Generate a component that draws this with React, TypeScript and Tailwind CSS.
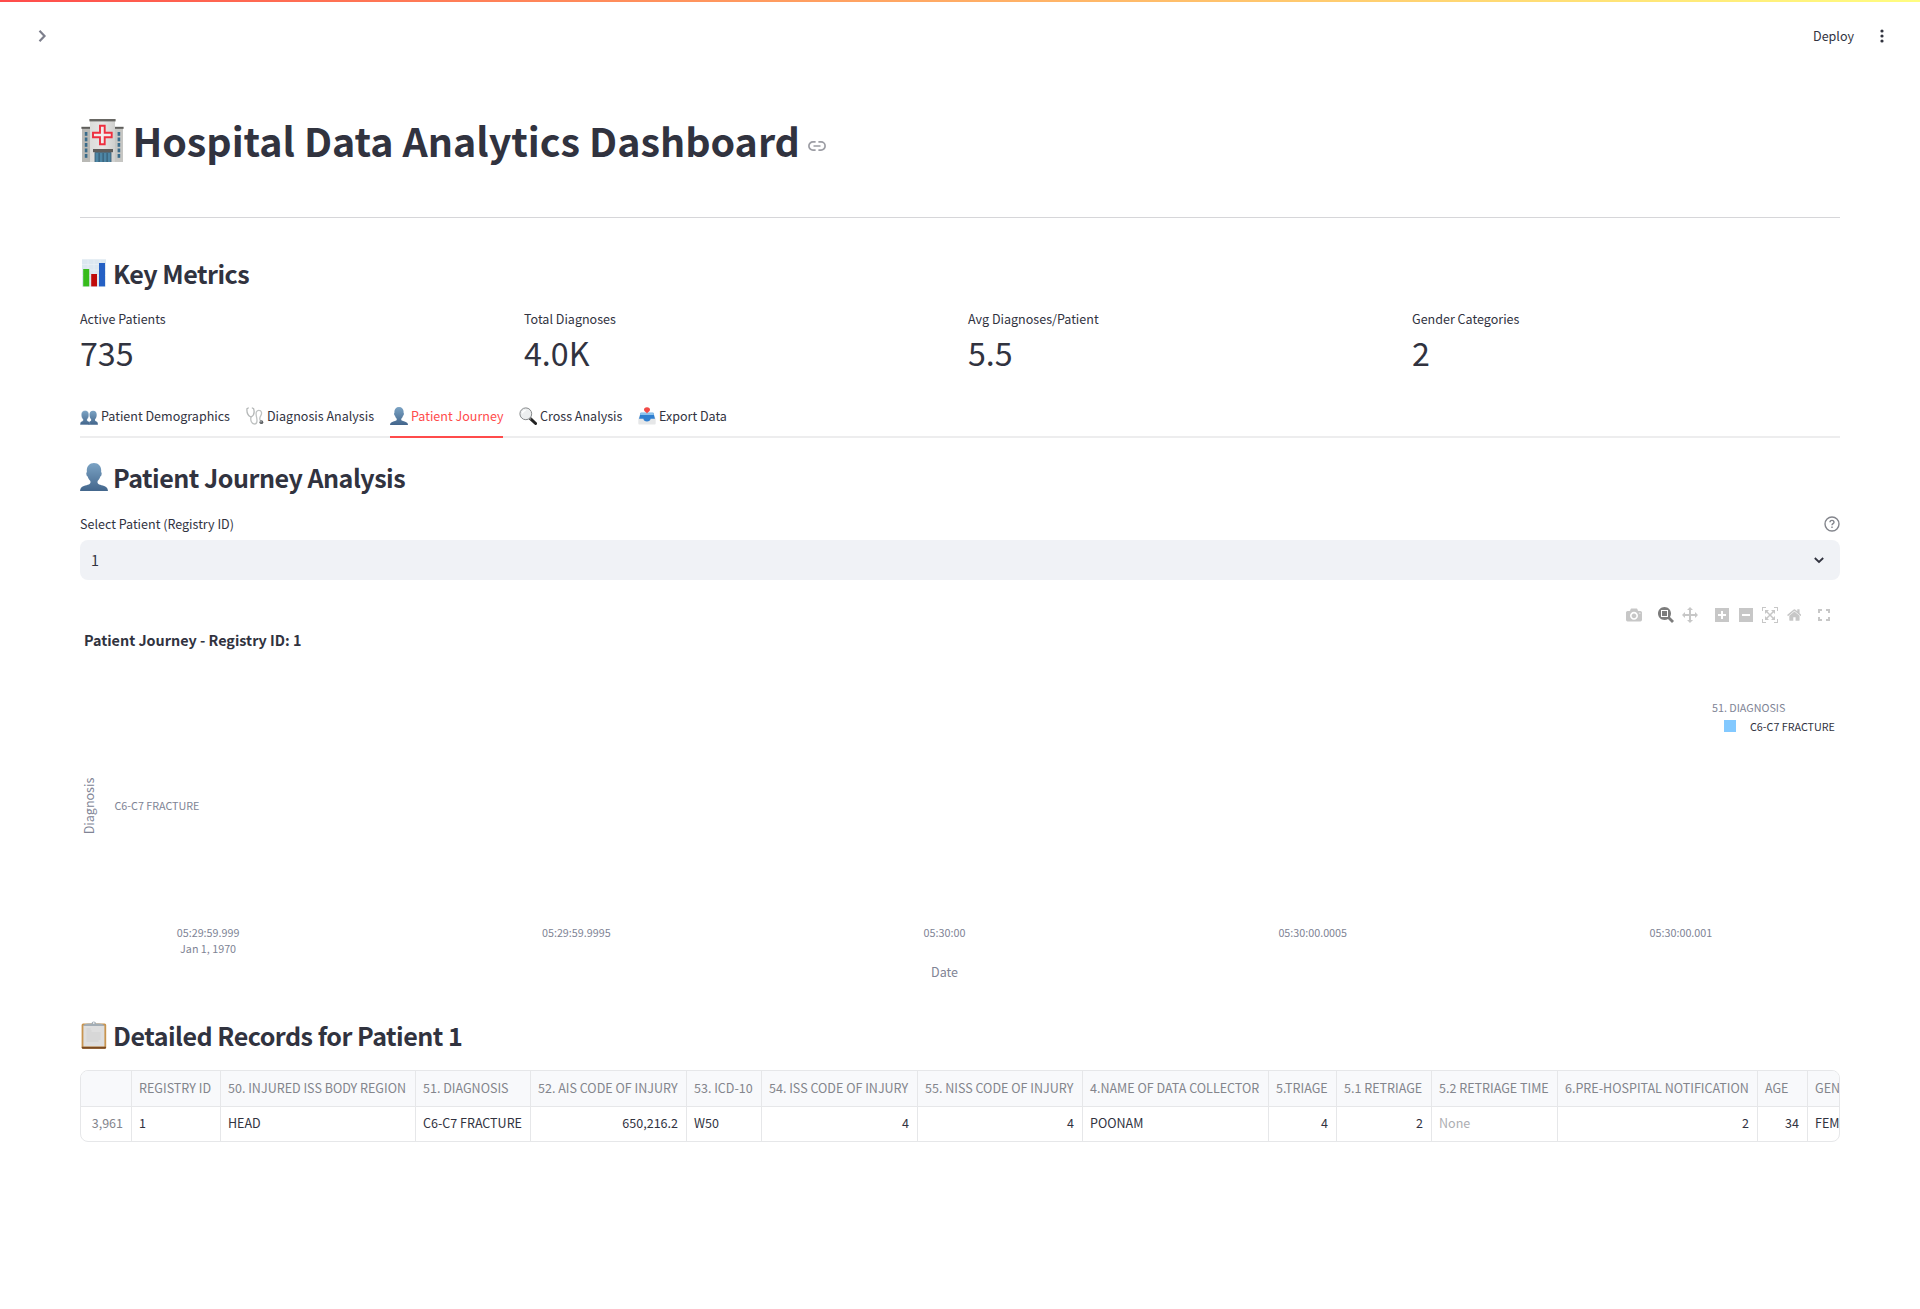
import { useId } from "react";
import type { ReactNode } from "react";

const CAMERA =
  "m500 450c-83 0-150-67-150-150 0-83 67-150 150-150 83 0 150 67 150 150 0 83-67 150-150 150z m400 150h-120c-16 0-34 13-39 29l-31 93c-6 15-23 28-40 28h-340c-16 0-34-13-39-28l-31-94c-6-15-23-28-40-28h-120c-55 0-100-45-100-100v-450c0-55 45-100 100-100h800c55 0 100 45 100 100v450c0 55-45 100-100 100z m-400-550c-138 0-250 112-250 250 0 138 112 250 250 250 138 0 250-112 250-250 0-138-112-250-250-250z m365 380c-19 0-35 16-35 35 0 19 16 35 35 35 19 0 35-16 35-35 0-19-16-35-35-35z";
const ZOOM_BOX =
  "m1000-25l-250 251c40 63 63 138 63 218 0 224-182 406-407 406-224 0-406-182-406-406s183-406 407-406c80 0 155 22 218 62l250-250 125 125z m-812 250l0 438 437 0 0-438-437 0z m62 375l313 0 0-312-313 0 0 312z";
const PAN =
  "m1000 350l-187 188 0-125-250 0 0 250 125 0-188 187-187-187 125 0 0-250-250 0 0 125-188-188 186-187 0 125 252 0 0-250-125 0 187-188 188 188-125 0 0 250 250 0 0-126 187 188z";
const ZOOM_IN =
  "m1 787l0-875 875 0 0 875-875 0z m687-500l-187 0 0-187-125 0 0 187-188 0 0 125 188 0 0 187 125 0 0-187 187 0 0-125z";
const ZOOM_OUT = "m0 788l0-876 875 0 0 876-875 0z m688-500l-500 0 0 125 500 0 0-125z";
const AUTOSCALE =
  "m250 850l-187 0-63 0 0-62 0-188 63 0 0 188 187 0 0 62z m688 0l-188 0 0-62 188 0 0-188 62 0 0 188 0 62-62 0z m-875-938l0 188-63 0 0-188 0-62 63 0 187 0 0 62-187 0z m875 188l0-188-188 0 0-62 188 0 62 0 0 62 0 188-62 0z m-125 188l-1 0-93-94-156 156 156 156 92-93 2 0 0 250-250 0 0-2 93-92-156-156-156 156 94 92 0 2-250 0 0-250 0 0 93 93 157-156-157-156-93 94 0 0 0-250 250 0 0 0-94 93 156 157 156-157-93-93 0 0 250 0 0 250z";
const HOME =
  "m786 296v-267q0-15-11-26t-25-10h-214v214h-143v-214h-214q-15 0-25 10t-11 26v267q0 1 0 2t0 2l321 264 321-264q1-1 1-4z m124 39l-34-41q-5-5-12-6h-2q-7 0-12 3l-386 322-386-322q-7-4-13-4-7 2-12 7l-35 41q-4 5-3 13t6 12l401 334q18 15 42 15t43-15l136-114v109q0 8 5 13t13 5h107q8 0 13-5t5-13v-227l122-102q5-5 6-12t-4-13z";

function ModeIcon({ d, w = 1000, active = false }: { d: string; w?: number; active?: boolean }) {
  return (
    <span className="flex w-6 justify-center">
      <svg
        viewBox={`0 0 ${w} 1000`}
        className={active ? "h-4 w-auto fill-[#7c7c7c]" : "h-4 w-auto fill-[#c7c7c7]"}
      >
        <path transform="matrix(1 0 0 -1 0 850)" d={d} />
      </svg>
    </span>
  );
}

function HospitalEmoji() {
  const id = useId();
  return (
    <svg viewBox="0 0 43 44" className="h-11 w-[43px]">
      <defs>
        <linearGradient id={id} x1="0" x2="1">
          <stop offset="0" stopColor="#dcdcda" />
          <stop offset="0.5" stopColor="#e6e6e5" />
          <stop offset="1" stopColor="#cfcfcd" />
        </linearGradient>
      </defs>
      <rect x="1" y="10" width="9" height="34" fill="#b9b9b5" />
      <rect x="33" y="10" width="9" height="34" fill="#c6c6c3" />
      <rect x="0.400" y="8.800" width="9.600" height="2" fill="#5f5e5b" />
      <rect x="33" y="8.800" width="9.600" height="2" fill="#5f5e5b" />
      <rect x="9" y="2" width="25" height="42" fill={`url(#${id})`} />
      <rect x="8.400" y="1" width="26.200" height="2.400" fill="#686763" />
      {[14, 19.5, 25, 30.5, 36].map((y) => (
        <g key={y} fill="#3a6c8b">
          <rect x="3.800" y={y} width="2.600" height="3.800" />
          <rect x="36.600" y={y} width="2.600" height="3.800" />
        </g>
      ))}
      <rect x="12" y="31" width="20" height="3.200" fill="#5e5d5b" />
      <rect x="13.600" y="34.200" width="16.800" height="9.800" fill="#33566b" />
      <path d="M14.400 35h3.200v9h-3.200zM18.600 35h3v9h-3zM22.600 35h3v9h-3zM26.600 35h3v9h-3z" fill="#4d86a5" />
      <path
        d="M19 7.800h4.700v7h7v4.500h-7v6.900H19v-6.900h-7v-4.500h7z"
        fill="#f0ecec"
        stroke="#ee2f3f"
        strokeWidth="1.900"
      />
    </svg>
  );
}

function ChartEmoji() {
  return (
    <svg viewBox="0 0 28 28" className="size-7">
      <rect x="2" y="0.300" width="24" height="27.400" fill="#dce7f0" />
      <path d="M2 5.500h24M2 11h24M2 16.500h24M2 22h24M8 .3v27.400M14 .3v27.400M20 .3v27.400" stroke="#e9f1f7" strokeWidth=".7" />
      <rect x="3.200" y="10" width="6" height="17.400" fill="#37bb1c" />
      <rect x="11.200" y="15" width="5.800" height="12.400" fill="#c00a0a" />
      <rect x="19" y="4" width="6" height="23.400" fill="#2560c4" />
    </svg>
  );
}

function PersonEmoji({ className }: { className: string }) {
  const id = useId();
  return (
    <svg viewBox="0 0 28 28" className={className}>
      <defs>
        <linearGradient id={id} x1="0" x2="0" y1="0" y2="1">
          <stop offset="0" stopColor="#7ba3c4" />
          <stop offset="1" stopColor="#43668c" />
        </linearGradient>
      </defs>
      <path
        fill={`url(#${id})`}
        d="M14 0c4.500 0 7.200 3.200 7.200 7.600 0 .6-.1 1.200-.1 1.700.8.300.7 1.400.4 2.500-.2.900-.6 1.700-1.200 1.700-.6 2-1.500 3.400-2.500 4.300-.6 1.400-.4 2.500.6 3.200 1.800 1.200 7.100 1.600 8.700 4 .5.800.8 1.900.9 3H0c.1-1.100.4-2.200.9-3 1.600-2.400 6.900-2.800 8.700-4 1-.7 1.200-1.800.6-3.200-1-.9-1.900-2.300-2.500-4.300-.6 0-1-.8-1.200-1.700-.3-1.100-.4-2.200.4-2.500 0-.5-.1-1.100-.1-1.700C6.800 3.200 9.500 0 14 0z"
      />
    </svg>
  );
}

function PeopleEmoji() {
  const id = useId();
  const bust =
    "M4.600 0c2.300 0 3.600 1.600 3.600 4 0 2-.7 3.700-1.700 4.700-.1.900.1 1.500 1 1.800 1.300.4 1.900 1.300 1.900 3.500H-.3c0-2.200.8-3.100 2-3.500.9-.3 1.100-.9 1-1.800-1-1-1.700-2.700-1.700-4.700C1 1.600 2.300 0 4.600 0z";
  return (
    <svg viewBox="0 0 18 18" className="size-[18px]">
      <defs>
        <linearGradient id={id} x1="0" x2="0" y1="0" y2="1">
          <stop offset="0" stopColor="#7ba3c4" />
          <stop offset="1" stopColor="#43668c" />
        </linearGradient>
      </defs>
      <path d={bust} transform="translate(8.500 3.700)" fill={`url(#${id})`} />
      <path d={bust} transform="translate(.5 3.700)" fill={`url(#${id})`} stroke="#a9c0d4" strokeWidth=".3" />
    </svg>
  );
}

function StethoscopeEmoji() {
  return (
    <svg viewBox="0 0 18 18" className="size-[18px]" fill="none" strokeLinecap="round">
      <path d="M2.300 1 1 1.700c-.4 3.600.6 6.800 4 8.300 3-1.500 3.600-5 2.600-8.300L6.300 1" stroke="#b4b7b7" strokeWidth="1.300" />
      <path d="M5 10c-.8 3.500.6 7 3.400 7 3.400 0 2.700-4.600 2-7.700-.9-4 .3-6 2.400-6 3 0 3.300 3.200 2 5.400-1.400 2.300-1.600 3.600-.2 5.200" stroke="#bfc2c2" strokeWidth="1.300" />
      <circle cx="15.400" cy="15.200" r="1.900" fill="#5d6063" />
      <circle cx="15" cy="14.800" r=".7" fill="#bfc2c4" />
    </svg>
  );
}

function MagnifierEmoji() {
  return (
    <svg viewBox="0 0 18 18" className="size-[18px]">
      <path d="m11.400 11.700 5.200 4.800" stroke="#222" strokeWidth="3" strokeLinecap="round" />
      <path d="m10.200 10.600 1.800 1.700" stroke="#777" strokeWidth="1.600" />
      <circle cx="6.800" cy="6.800" r="5.900" fill="#eceeef" stroke="#85888a" strokeWidth="1" />
      <path d="M3.400 6.300c.3-1.800 1.600-2.900 3.300-3" stroke="#fff" strokeWidth="1.200" fill="none" />
    </svg>
  );
}

function OutboxEmoji() {
  return (
    <svg viewBox="0 0 18 18" className="size-[18px]">
      <path d="M2.500 6h13l2.200 6v4.200c0 .8-.4 1.300-1.200 1.300h-15c-.8 0-1.200-.5-1.200-1.300V12z" fill="#e6e7e8" />
      <path d="M2.700 5.800h12.600l1.700 6h-4.400c-.3 1.800-1.400 2.700-3.600 2.700s-3.300-.9-3.600-2.700H1z" fill="#2f7fd0" />
      <path d="M2.700 5.800h12.600l.6 2.200H2.100z" fill="#8cc3ee" />
      <path d="M9 .2c2.100 0 3 1.200 3 2.400 0 1.400-1 2.300-2 2.600l-1 1.300-1-1.300c-1-.3-2-1.200-2-2.600C6 1.400 6.900.2 9 .2z" fill="#f24a47" />
    </svg>
  );
}

function ClipboardEmoji() {
  return (
    <svg viewBox="0 0 28 28" className="size-7">
      <rect x="1.600" y="2.400" width="24.600" height="25.400" rx="1.500" fill="#c8944f" />
      <path d="M1.800 25.800h24.200v.7c0 .9-.6 1.300-1.500 1.300H3.300c-.9 0-1.500-.4-1.500-1.300z" fill="#7a4a22" />
      <rect x="3.400" y="4.600" width="21" height="20.800" fill="#dedede" />
      <path d="M6.500 8h4M6.500 10h5M6.500 12h14M6.500 14h14M6.500 16h14M6.500 18h14M6.500 20h12" stroke="#cfcfd0" strokeWidth="1.100" />
      <path d="M3.400 4.900c.4-1.700 2-2.200 5.600-2.400h2.500C11.700 1.100 12.600.4 13.800.4s2.100.7 2.300 2.100h2.500c3.600.2 5.200.7 5.800 2.400z" fill="#a3adb5" />
      <circle cx="13.800" cy="2.100" r=".8" fill="#fff" />
    </svg>
  );
}

function SectionTitle({ icon, children, className }: { icon: ReactNode; children: ReactNode; className: string }) {
  return (
    <h2
      className={`flex h-[34px] items-center text-[25.070px] leading-[34px] font-semibold tracking-[-0.500px] ${className}`}
    >
      <span className="flex w-[33px] shrink-0">{icon}</span>
      <span className="whitespace-nowrap">{children}</span>
    </h2>
  );
}

const metrics = [
  { label: "Active Patients", value: "735" },
  { label: "Total Diagnoses", value: "4.0K" },
  { label: "Avg Diagnoses/Patient", value: "5.5" },
  { label: "Gender Categories", value: "2" },
];

const tabs = [
  { label: "Patient Demographics", icon: <PeopleEmoji />, width: "w-[150px]" },
  { label: "Diagnosis Analysis", icon: <StethoscopeEmoji />, width: "w-[128px]" },
  { label: "Patient Journey", icon: <PersonEmoji className="size-[18px]" />, width: "w-[113px]", active: true },
  { label: "Cross Analysis", icon: <MagnifierEmoji />, width: "w-[103px]" },
  { label: "Export Data", icon: <OutboxEmoji />, width: "w-[90px]" },
];

const ticks = ["05:29:59.999", "05:29:59.9995", "05:30:00", "05:30:00.0005", "05:30:00.001"];

const columns = [
  { head: "", cell: "3,961", width: "w-[51px]", tone: "justify-end text-[#83858c]" },
  { head: "REGISTRY ID", cell: "1", width: "w-[89px]", tone: "" },
  { head: "50. INJURED ISS BODY REGION", cell: "HEAD", width: "w-[195px]", tone: "" },
  { head: "51. DIAGNOSIS", cell: "C6-C7 FRACTURE", width: "w-[115px]", tone: "" },
  { head: "52. AIS CODE OF INJURY", cell: "650,216.2", width: "w-[156px]", tone: "justify-end" },
  { head: "53. ICD-10", cell: "W50", width: "w-[75px]", tone: "" },
  { head: "54. ISS CODE OF INJURY", cell: "4", width: "w-[156px]", tone: "justify-end" },
  { head: "55. NISS CODE OF INJURY", cell: "4", width: "w-[165px]", tone: "justify-end" },
  { head: "4.NAME OF DATA COLLECTOR", cell: "POONAM", width: "w-[186px]", tone: "" },
  { head: "5.TRIAGE", cell: "4", width: "w-[68px]", tone: "justify-end" },
  { head: "5.1 RETRIAGE", cell: "2", width: "w-[95px]", tone: "justify-end" },
  { head: "5.2 RETRIAGE TIME", cell: "None", width: "w-[126px]", tone: "text-[#adaeb2]" },
  { head: "6.PRE-HOSPITAL NOTIFICATION", cell: "2", width: "w-[200px]", tone: "justify-end" },
  { head: "AGE", cell: "34", width: "w-[50px]", tone: "justify-end" },
  { head: "GENDER", cell: "FEMALE", width: "w-[90px]", tone: "" },
];

export default function App() {
  return (
    <div className="h-[1309px] overflow-hidden bg-white font-['Noto_Sans_CJK_SC','Noto_Sans_CJK_JP',sans-serif] text-[12.540px] text-[#31333f]">
      <div className="h-0.5 bg-linear-to-r from-[#ff4b4b] to-[#fffd80]" />
      <header className="flex h-[58px] items-center justify-between pr-8 pl-9">
        <svg viewBox="0 0 12 14" className="mt-[9px] h-3.5 w-3" fill="none" stroke="#7d7f8c" strokeWidth="2.200">
          <path d="m3.500 1.800 5 5.200-5 5.200" />
        </svg>
        <div className="mt-[9px] flex items-center">
          <span className="leading-5">Deploy</span>
          <svg viewBox="0 0 12 16" className="ml-[22px] h-4 w-3" fill="#31333f">
            <circle cx="6" cy="3" r="1.600" />
            <circle cx="6" cy="8" r="1.600" />
            <circle cx="6" cy="13" r="1.600" />
          </svg>
        </div>
      </header>

      <main className="mx-20 flex flex-col">
        <h1 className="mt-[54px] flex h-[52px] items-center text-[39.400px] leading-[52px] font-bold">
          <span className="-mt-px flex w-[52.500px] shrink-0 pl-px">
            <HospitalEmoji />
          </span>
          <span className="whitespace-nowrap">Hospital Data Analytics Dashboard</span>
          <svg viewBox="0 0 18 10" className="mt-[11px] ml-2 h-2.5 w-[18px]" fill="none" stroke="#9c9da4" strokeWidth="1.700">
            <path d="M7.600.9H5a4.100 4.100 0 0 0 0 8.200h2.600M10.400.9H13a4.100 4.100 0 0 1 0 8.200h-2.600M5.500 5h7" />
          </svg>
        </h1>
        <hr className="mt-[51px] border-[#d6d6d9]" />

        <SectionTitle icon={<ChartEmoji />} className="mt-[38px]">
          Key Metrics
        </SectionTitle>
        <div className="mt-[19px] grid grid-cols-4 gap-4">
          {metrics.map((m) => (
            <div key={m.label}>
              <div className="h-5 leading-5 whitespace-nowrap">{m.label}</div>
              <div className="h-[46px] text-[32.200px] leading-[46px] whitespace-nowrap">{m.value}</div>
            </div>
          ))}
        </div>

        <div className="mt-[23px] flex h-10 gap-4 border-b-2 border-[#ededee]">
          {tabs.map((t) => (
            <div
              key={t.label}
              className={`flex h-10 shrink-0 items-center border-b-2 pb-0.5 whitespace-nowrap ${t.width} ${
                t.active ? "border-[#ff4b4b] text-[#ff4b4b]" : "border-transparent"
              }`}
            >
              <span className="-mt-px mr-[3px] flex shrink-0">{t.icon}</span>
              {t.label}
            </div>
          ))}
        </div>

        <SectionTitle icon={<PersonEmoji className="size-7" />} className="mt-[22px]">
          Patient Journey Analysis
        </SectionTitle>
        <div className="mt-5 flex h-5 items-center justify-between leading-5">
          <span>Select Patient (Registry ID)</span>
          <svg viewBox="0 0 16 16" className="size-4" fill="none" stroke="#83858c" strokeWidth="1.400">
            <circle cx="8" cy="8" r="7" />
            <path d="M6 6.300C6 5.100 6.900 4.400 8 4.400s2 .7 2 1.800c0 1.400-2 1.500-2 3.100" />
            <path d="M8 10.500v1.500" />
          </svg>
        </div>
        <div className="mt-1.5 flex h-10 items-center justify-between rounded-lg bg-[#f0f2f6] pr-4 pl-[11px] text-[14.330px]">
          <span>1</span>
          <svg viewBox="0 0 10 8" className="h-2 w-2.5" fill="none" stroke="#31333f" strokeWidth="1.800">
            <path d="M.8 2 5 6l4.200-4" />
          </svg>
        </div>

        <section className="mt-4 flex h-[405px] flex-col text-[#808495]">
          <div className="mt-[11px] flex h-4 items-center justify-end pr-1">
            <ModeIcon d={CAMERA} />
            <span className="w-2" />
            <ModeIcon d={ZOOM_BOX} active />
            <ModeIcon d={PAN} />
            <span className="w-2" />
            <ModeIcon d={ZOOM_IN} w={875} />
            <ModeIcon d={ZOOM_OUT} w={875} />
            <ModeIcon d={AUTOSCALE} />
            <ModeIcon d={HOME} w={928.6} />
            <svg viewBox="0 0 12 12" className="mr-[6px] ml-3 size-3" fill="none" stroke="#c7c7c7" strokeWidth="2">
              <path d="M1 4V1h3M8 1h3v3M11 8v3H8M4 11H1V8" />
            </svg>
          </div>
          <h3 className="mt-[7px] h-5 pl-1 text-[14.370px] leading-5 font-bold">
            <span className="text-[#31333f]">Patient Journey - Registry ID: 1</span>
          </h3>
          <div className="flex h-[275px]">
            <div className="mt-[118px] flex h-[76px] w-[18px] items-center justify-center">
              <span className="-rotate-90 leading-5 whitespace-nowrap">Diagnosis</span>
            </div>
            <div className="mt-[146px] ml-[16.500px] text-[10.750px] leading-5">C6-C7 FRACTURE</div>
            <div className="mt-12 ml-auto w-[128px] text-[10.750px]">
              <div className="h-[19px] leading-[19px]">51. DIAGNOSIS</div>
              <div className="flex h-[18px] items-center text-[#31333f]">
                <span className="ml-3 size-3 bg-[#83c9ff]" />
                <span className="mt-0.5 ml-[14px] whitespace-nowrap">C6-C7 FRACTURE</span>
              </div>
            </div>
          </div>
          <div className="-ml-[56px] flex w-[1841px] text-[10.750px] leading-4">
            {ticks.map((t, i) => (
              <div key={t} className="flex-1 text-center">
                {t}
                {i === 0 && <div>Jan 1, 1970</div>}
              </div>
            ))}
          </div>
          <div className="mt-[5px] w-[1729px] text-center leading-5">Date</div>
        </section>

        <SectionTitle icon={<ClipboardEmoji />} className="mt-[17px]">
          Detailed Records for Patient 1
        </SectionTitle>
        <div className="mt-[18px] flex h-[72px] w-[1760px] overflow-hidden rounded-lg border border-[#e6e7e9]">
          {columns.map((c) => (
            <div key={c.head} className={`shrink-0 border-r border-[#e6e7e9] whitespace-nowrap ${c.width}`}>
              <div className="flex h-9 items-center border-b border-[#e6e7e9] bg-[#f8f9fb] px-[7px] text-[#83858c]">
                {c.head}
              </div>
              <div className={`flex h-[34px] items-center pr-2 pb-0.5 pl-[7px] ${c.tone}`}>{c.cell}</div>
            </div>
          ))}
        </div>
      </main>
    </div>
  );
}
